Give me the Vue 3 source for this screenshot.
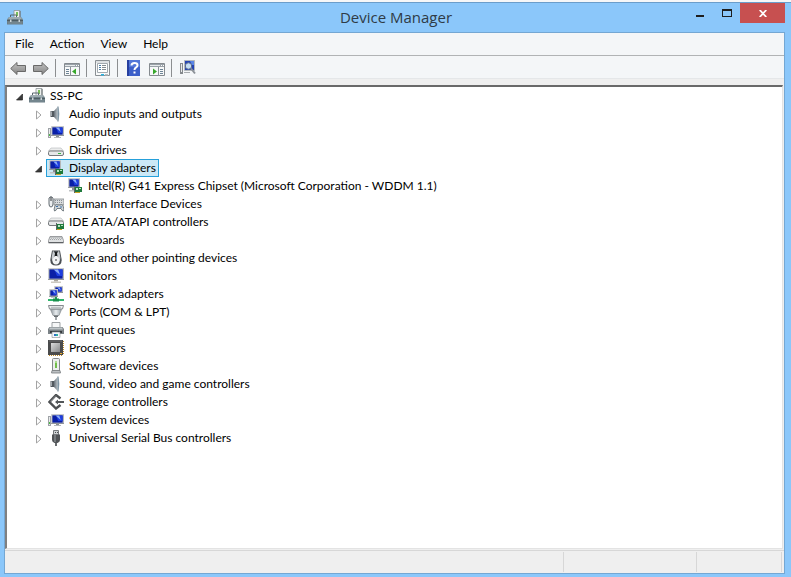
<script setup>
import { ref } from 'vue'

const monitor = (x, y, w, h) =>
  `<rect x="${x}" y="${y}" width="${w}" height="${h}" fill="#b4b7b9"/>` +
  `<path d="M${x} ${y}h${w}v.6h${-w + 0.6}v${h - 0.6}h-.6z" fill="#dcdedf"/>` +
  `<path d="M${x} ${y + h - 0.7}h${w}v.7h${-w}z" fill="#85898d"/>` +
  `<rect x="${x + 1.4}" y="${y + 1.4}" width="${w - 2.8}" height="${h - 2.8}" fill="#0a1fa6"/>` +
  `<path d="M${x + w * 0.4} ${y + 1.4}h${w * 0.6 - 1.4}v${h * 0.55}h${-w * 0.35}z" fill="#1d3ee0"/>` +
  `<path d="M${x + w * 0.35} ${y + 1.4}h${w * 0.28}l${w * 0.12} ${h * 0.45}z" fill="#8fb0f6"/>`

const card = (x, y) =>
  `<rect x="${x}" y="${y}" width="7" height="5" fill="#1f7a3c"/><path d="M${x} ${y + 5}h5v1h-5z" fill="#c9a227"/>` +
  `<path d="M${x + 1} ${y + 1}h2v2h-2zM${x + 4} ${y + 1}h2v1h-2z" fill="#b9e3c2"/><path d="M${x - 1} ${y - 1}h1v7h-1z" fill="#5c6464"/>`

const drive = (y) =>
  `<path d="M3 ${y}h10l2.500 3H.500z" fill="#eceded" stroke="#b4b6b8" stroke-width=".6"/>` +
  `<rect x=".5" y="${y + 3}" width="15" height="4.500" rx="1.500" fill="#e6e8e9" stroke="#75787b"/>`

const speaker =
  '<path d="M2.500 5h3.500v6H2.500z" fill="#53595f"/><path d="M3 5.500h1V10H3z" fill="#a4aab0"/><path d="M6 5l4-4.500v15L6 11z" fill="url(#cone)"/><path d="M10 .5q2 7.500 0 15z" fill="#7d93a2" stroke="#7d93a2" stroke-width=".6"/>'

const computer =
  '<path d="M0 4h3v10H0z" fill="#9fa3a7"/><path d="M1 5h1v8H1z" fill="#e9ebec"/><path d="M1 10h1v2H1z" fill="#4db848"/>' +
  monitor(3, 2, 13, 10) +
  '<path d="M8 12h3v1H8z" fill="#888d92"/><path d="M6 13h7v1H6z" fill="#b5b8bb"/>'

const toolbox =
  '<path d="M7 .5h6V8H7z" fill="#eef1ee" stroke="#8e9698" stroke-width=".8"/><path d="M9 2h2v4H9z" fill="#78bf58"/><path d="M12.500 1h1v6h-1z" fill="#666d70"/>' +
  '<path d="M2 7h12l2 2.500v5H0v-5z" fill="#6d7f87"/><path d="M2.500 7h11l1.500 2H1z" fill="#9eacb1"/><path d="M3.500 7V5h6v2" fill="none" stroke="#59666c"/>' +
  '<path d="M0 10.500h16" stroke="#46545b" stroke-width=".8"/><path d="M3 9.500h1.500v2.500H3zM11.500 9.500H13v2.500h-1.500z" fill="#cdd6d9"/><path d="M1 13h14" stroke="#80929a" stroke-width=".8"/>'

const icons = {
  toolbox,
  speaker,
  computer,
  disk: drive(6) + '<path d="M10 11h3v1h-3z" fill="#38b544"/>',
  display:
    monitor(1, 0, 12, 10) +
    '<path d="M5 10h3v2H5z" fill="#8b9095"/><path d="M2 12h6v1.500H2z" fill="#bfc2c5"/>' + card(8, 9),
  hid:
    '<path d="M1 2q2-3 4 0v6q0 3-2 3t-2-3z" fill="#eceff1" stroke="#626a70"/><path d="M3 1v4" stroke="#303539"/>' +
    '<path d="M6 3h10v6H6z" fill="#d8dbdd" stroke="#777c80" stroke-width=".7"/><path d="M7 4.500h8M7 6.500h8" stroke="#8a9095" stroke-dasharray="1 1"/>' +
    '<path d="M6.500 15q-1-1 .5-5.500 1-1.500 3-.5h2q2-1 3 .5 1.500 4.500.5 5.500-1.500 0-2.500-2.500h-4Q8 15 6.500 15z" fill="#cfd6da" stroke="#5a646b" stroke-width=".8"/><path d="M8 10.500h2M13 10v2" stroke="#3f6fa8"/>',
  ide: drive(4) + card(9, 10),
  keyboard:
    '<path d="M2 4.500h12l1.500 4v2.500h-15V8.500z" fill="#dfe1e2" stroke="#85888b" stroke-width=".8"/>' +
    '<path d="M2.500 5.500h11M2 7.500h12" stroke="#a1a4a7" stroke-dasharray="1 1"/><path d="M3 6.500h11" stroke="#b5b8bb" stroke-dasharray="1 1"/><path d="M1 10.500h14" stroke="#5e6164"/>',
  mouse:
    '<path d="M4 .5h8l1.500 8q1 7-5.500 7t-5.500-7z" fill="#4a4e52"/><path d="M5 .5l2 3-2 8q-2-2-1-6zM11 .5l-2 3 2 8q2-2 1-6z" fill="#c8ccd0"/>' +
    '<path d="M8 5q5 4 3 8-3 3-6 0-2-4 3-8z" fill="#f3f4f5"/><path d="M7 2h2v4H7z" fill="#17191b"/><circle cx="8" cy="10" r="1" fill="#777"/>',
  monitor:
    monitor(0, 0, 16, 12) + '<path d="M6 12h4v1.500H6z" fill="#a9a69d"/><path d="M3 13.500h10V15H3z" fill="#ccc9c0"/>',
  network:
    monitor(6, 0, 9, 7) + monitor(1, 3, 9, 8) +
    '<path d="M3 11h5v1H3z" fill="#c5c8cb"/><path d="M7 11h2v2H7z" fill="#1f9c55"/><path d="M0 13h16v2H0z" fill="#2fb56b"/><path d="M5 12.500h6v3H5z" fill="#1b8f4c"/>',
  port:
    '<path d="M.5 1.500h15L14.500 5H1.500z" fill="#eceeef" stroke="#84898d"/><path d="M3 3.300h10" stroke="#a3a8ab" stroke-width=".8"/>' +
    '<path d="M2.500 5.500h11l-2.500 6H5z" fill="url(#steel)" stroke="#84898d" stroke-width=".7"/><path d="M6 11.500h4V13H6z" fill="#6b7074"/><path d="M7 13h2v3H7z" fill="#a1a5a8"/>',
  printer:
    '<path d="M4 .5h8V6H4z" fill="#f6f7f7" stroke="#888d90" stroke-width=".8"/><path d="M1.500 5h13l1.500 2v5H0V7z" fill="#7b8286"/><path d="M2 5.500h12l1 2H1z" fill="#bfc5c8"/>' +
    '<path d="M2 9h12v2H2z" fill="#34393c"/><path d="M4 10h8v5.500H4z" fill="#f4f6f8" stroke="#888d90" stroke-width=".6"/><path d="M6 12h2v2H6z" fill="#2c6fc4"/><path d="M8 12h2v2H8z" fill="#2faf9b"/>',
  processor:
    '<path d="M0 0h15v15H0z" fill="#4a4b4c"/><path d="M3 3h9v9H3z" fill="url(#chip)"/><path d="M1 1h13" stroke="#6f7173"/>' +
    '<path d="M15.500 1v14M1 15.500h14" stroke="#c08d2b" stroke-dasharray="1 1"/><path d="M12 13h2v1h-2z" fill="#e6a92f"/>',
  software:
    '<path d="M4.500 1.500q0-1 1-1h5q1 0 1 1V13h-7z" fill="#eceeef" stroke="#85898c"/><path d="M7 3h2v7H7z" fill="#72bd4c"/><path d="M7 3h2v2H7z" fill="#a9dc8d"/><path d="M4 12.500h8l.5 2.500h-9z" fill="#bdc1c4" stroke="#777b7e" stroke-width=".8"/>',
  storage:
    '<path d="M12.500 4.500L8 1 1.500 8 8 14.500l4.500-3.500" fill="none" stroke="#4c4f51" stroke-width="2.400"/><path d="M8 1.500L2.500 7.500" stroke="#929699" stroke-width=".8"/>' +
    '<path d="M7 8l3-2.500V7h6v2h-6v1.500z" fill="#54585a"/>',
  usb:
    '<path d="M5.500.500h5V5h-5z" fill="#cfd2d4" stroke="#75797c"/><path d="M7 2h1v1H7zM9 2h1v1H9z" fill="#4b4f52"/><path d="M4 4.500h8V10q0 2-2.500 3h-3Q4 12 4 10z" fill="#505356"/><path d="M6 5h2v7H6z" fill="#777b7e"/><path d="M7 13h2v3H7z" fill="#686c6f"/>',
  back: '<path d="M.7 8.500L7 2.500v3h8.500v6H7v3z" fill="url(#arrow)" stroke="#696969"/>',
  forward: '<path d="M15.300 8.500L9 2.500v3H.500v6H9v3z" fill="url(#arrow)" stroke="#696969"/>',
  consoleTree:
    '<path d="M.5 3.500h15v12H.500z" fill="#f7f8f9" stroke="#858a8f"/><path d="M1 4h14v3H1z" fill="#9aa2a9"/><path d="M1 5.500h10" stroke="#e7eaec"/><path d="M12 5.500h1M14 5.500h1" stroke="#fff"/>' +
    '<path d="M6.500 7v9" stroke="#8b9197"/><path d="M2 9.500h3M2 11.500h3M2 13.500h3" stroke="#6d8496"/><path d="M12 8.500v6l-4-3z" fill="#37a72b"/>',
  properties:
    '<path d="M.5.500h14v15H.500z" fill="#f8f9fa" stroke="#8a8f94"/><path d="M2.500 3.500h10v9h-10z" fill="#fff" stroke="#a1a8ae"/><path d="M1 2h13" stroke="#c5c9cd"/>' +
    '<path d="M4 5.500h2M4 7.500h2M4 9.500h2" stroke="#4d7ea8"/><path d="M7 5.500h4M7 7.500h4M7 9.500h4" stroke="#858b90"/><path d="M6 14h3v1.500H6z" fill="#28b3e2"/><path d="M10 14h3v1.500h-3z" fill="#b9bec2"/>',
  help:
    '<path d="M1 0h13v16H1z" fill="#3c5fc9"/><path d="M1 0h2v16H1z" fill="#263f9f"/><path d="M3 0h11v7H3z" fill="#5377d8"/>' +
    '<path d="M5.500 5.500q0-2.500 3-2.500t3 2.300q0 1.500-1.600 2.400-1.400.8-1.400 2.300" fill="none" stroke="#fff" stroke-width="2"/><path d="M7.500 11.500h2v2h-2z" fill="#fff"/>',
  actionPane:
    '<path d="M.5 3.500h15v12H.500z" fill="#f7f8f9" stroke="#858a8f"/><path d="M1 4h14v3H1z" fill="#9aa2a9"/><path d="M1 5.500h10" stroke="#e7eaec"/><path d="M12 5.500h1M14 5.500h1" stroke="#fff"/>' +
    '<path d="M9.500 7v9" stroke="#8b9197"/><path d="M11 9.500h3M11 11.500h3M11 13.500h3" stroke="#6d8496"/><path d="M4 8.500v6l4-3z" fill="#37a72b"/>',
  scan:
    '<path d="M0 3h3v11H0z" fill="#85898d"/><path d="M1 4h1v8H1z" fill="#e9ebec"/><path d="M4.500.500h10v10h-10z" fill="#2443b4" stroke="#b4b8bc"/><path d="M10 1h4v4h-2z" fill="#5b86e6"/>' +
    '<circle cx="8.500" cy="6" r="3.200" fill="#c4def5" stroke="#5c6c8c"/><path d="M11 8.500l4 5" stroke="#8b9197" stroke-width="2"/><path d="M4 12.500h6" stroke="#a9adb1"/>'
}

const menus = ['File', 'Action', 'View', 'Help']

const toolGroups = [
  [{ icon: 'back', label: 'Back' }, { icon: 'forward', label: 'Forward' }],
  [{ icon: 'consoleTree', label: 'Show or hide console tree' }],
  [{ icon: 'properties', label: 'Properties' }],
  [{ icon: 'help', label: 'Help' }, { icon: 'actionPane', label: 'Show or hide action pane' }],
  [{ icon: 'scan', label: 'Scan for hardware changes' }]
]

const rows = [
  { level: 0, icon: 'toolbox', name: 'SS-PC', open: true },
  { level: 1, icon: 'speaker', name: 'Audio inputs and outputs' },
  { level: 1, icon: 'computer', name: 'Computer' },
  { level: 1, icon: 'disk', name: 'Disk drives' },
  { level: 1, icon: 'display', name: 'Display adapters', open: true },
  { level: 2, icon: 'display', name: 'Intel(R) G41 Express Chipset (Microsoft Corporation - WDDM 1.1)', leaf: true },
  { level: 1, icon: 'hid', name: 'Human Interface Devices' },
  { level: 1, icon: 'ide', name: 'IDE ATA/ATAPI controllers' },
  { level: 1, icon: 'keyboard', name: 'Keyboards' },
  { level: 1, icon: 'mouse', name: 'Mice and other pointing devices' },
  { level: 1, icon: 'monitor', name: 'Monitors' },
  { level: 1, icon: 'network', name: 'Network adapters' },
  { level: 1, icon: 'port', name: 'Ports (COM & LPT)' },
  { level: 1, icon: 'printer', name: 'Print queues' },
  { level: 1, icon: 'processor', name: 'Processors' },
  { level: 1, icon: 'software', name: 'Software devices' },
  { level: 1, icon: 'speaker', name: 'Sound, video and game controllers' },
  { level: 1, icon: 'storage', name: 'Storage controllers' },
  { level: 1, icon: 'computer', name: 'System devices' },
  { level: 1, icon: 'usb', name: 'Universal Serial Bus controllers' }
]

const selected = ref('Display adapters')
</script>

<template>
  <div class="window">
    <svg class="defs" aria-hidden="true">
      <defs>
        <linearGradient id="steel"><stop offset="0" stop-color="#8b949b" /><stop offset=".5" stop-color="#e9edef" /><stop offset="1" stop-color="#98a3ab" /></linearGradient>
        <linearGradient id="cone"><stop offset="0" stop-color="#666f77" /><stop offset="1" stop-color="#c3cbd1" /></linearGradient>
        <linearGradient id="arrow" x2="0" y2="1"><stop offset="0" stop-color="#c2c2c2" /><stop offset="1" stop-color="#848484" /></linearGradient>
        <linearGradient id="chip" x2="1" y2="1"><stop offset="0" stop-color="#dcdddd" /><stop offset="1" stop-color="#858789" /></linearGradient>
      </defs>
    </svg>
    <header class="titlebar">
      <div class="side"><svg class="icon" viewBox="0 0 16 16" aria-hidden="true" v-html="icons.toolbox"></svg></div>
      <h1>Device Manager</h1>
      <div class="side controls">
        <button class="ctl" aria-label="Minimize"><svg width="8" height="8"><path d="M0 6h8v2H0z" fill="#1e1e1e" /></svg></button>
        <button class="ctl" aria-label="Maximize"><svg width="10" height="8"><path d="M0 0h10v8H0zM1 2v5h8V2z" fill="#1e1e1e" fill-rule="evenodd" /></svg></button>
        <button class="ctl close" aria-label="Close"><svg width="8" height="7"><path d="M.7 0l6.600 7M7.300 0L.7 7" stroke="#fff" stroke-width="1.800" /></svg></button>
      </div>
    </header>

    <main class="client">
      <nav class="menubar">
        <button v-for="m in menus" :key="m">{{ m }}</button>
      </nav>
      <div class="toolbar">
        <div v-for="(group, i) in toolGroups" :key="i" class="group">
          <button v-for="t in group" :key="t.icon" :aria-label="t.label">
            <svg class="icon" viewBox="0 0 16 16" aria-hidden="true" v-html="icons[t.icon]"></svg>
          </button>
        </div>
      </div>

      <ul class="tree">
        <li v-for="row in rows" :key="row.name" :class="'level' + row.level">
          <button v-if="!row.leaf" class="twisty" :aria-label="(row.open ? 'Collapse ' : 'Expand ') + row.name">
            <svg width="8" height="10" viewBox="0 0 8 10">
              <path v-if="row.open" d="M6.500 2v6H.500z" fill="#3a3a3a" stroke="#262626" stroke-width=".7" />
              <path v-else d="M1.500 1v8L6 5z" fill="#fff" stroke="#a3a3a3" />
            </svg>
          </button>
          <span v-else class="twisty"></span>
          <button class="node" :class="{ selected: selected === row.name }" @click="selected = row.name">
            <svg class="icon" viewBox="0 0 16 16" aria-hidden="true" v-html="icons[row.icon]"></svg>
            <span>{{ row.name }}</span>
          </button>
        </li>
      </ul>

      <footer class="status"><span class="message"></span><span class="wide"></span><span class="narrow"></span></footer>
    </main>
  </div>
</template>

<style>
body {
  margin: 0;
  background: #8bc7fa;
}
</style>

<style scoped>
.window {
  box-sizing: border-box;
  display: flex;
  flex-direction: column;
  min-height: 100vh;
  padding: 0 6px 3px 4px;
  border-top: 2px solid #f6f7f8;
  background: #8bc7fa;
  font-family: Lato, "Open Sans", sans-serif;
  font-size: 12px;
  color: #000;
}
.defs {
  position: absolute;
  width: 0;
  height: 0;
}
button {
  padding: 0;
  border: 0;
  background: none;
  font: inherit;
  color: inherit;
}
.icon {
  flex: none;
  display: block;
  width: 16px;
  height: 16px;
}
.titlebar {
  display: flex;
  height: 29px;
  margin: 0 -6px 0 -4px;
  padding: 0 6px 0 7px;
  border-top: 1px solid #6b9dca;
}
.side {
  flex: 1;
  padding-top: 7px;
}
.titlebar h1 {
  margin: 0;
  font-family: "Open Sans", sans-serif;
  font-size: 15px;
  font-weight: 400;
  line-height: 28px;
  color: #2f3b46;
}
.controls {
  display: flex;
  justify-content: flex-end;
  align-items: flex-start;
  padding-top: 0;
}
.ctl {
  display: flex;
  justify-content: center;
  width: 27px;
  height: 20px;
  padding-top: 6px;
}
.close {
  width: 45px;
  padding-top: 7px;
  background: #c75050;
}
.client {
  flex: 1;
  display: flex;
  flex-direction: column;
  border: 1px solid #74a7d3;
  background: #efefef;
}
.menubar {
  display: flex;
  height: 22px;
  padding-left: 2px;
  background: #f4f6f8;
  border-bottom: 1px solid #b1b3b5;
}
.menubar button {
  padding: 0 8px;
  line-height: 22px;
}
.toolbar {
  display: flex;
  height: 20px;
  padding: 2px 0 0 1px;
  margin-bottom: 6px;
  background: #f4f6f8;
  border-bottom: 1px solid #e5e7e9;
}
.group {
  display: flex;
}
.group + .group::before {
  content: "";
  width: 1px;
  height: 18px;
  margin: 1px 4px 0 3px;
  background: #8c8e90;
}
.group button {
  width: 23px;
  height: 20px;
  padding: 0 3px 0 4px;
}
.tree {
  flex: 1;
  margin: 0;
  padding: 0 0 0 3px;
  list-style: none;
  background: #fff;
  border: 1px solid #e3e3e3;
  border-top: 2px solid #696969;
  border-left: 2px solid #808080;
  margin-right: 1px;
}
.tree li {
  display: flex;
  height: 18px;
}
.level1 {
  padding-left: 19px;
}
.level2 {
  padding-left: 38px;
}
.twisty {
  display: flex;
  justify-content: center;
  align-items: center;
  box-sizing: border-box;
  width: 17px;
  height: 20px;
  padding-left: 2px;
}
.node {
  display: flex;
  align-items: center;
  gap: 5px;
  padding: 0 2px 0 1px;
  border: 1px solid transparent;
  line-height: 16px;
  white-space: nowrap;
}
.node.selected {
  background: #cbe8f6;
  border-color: #26a0da;
}
.status {
  display: flex;
  height: 22px;
  margin-top: 1px;
  padding-right: 2px;
  border-top: 1px solid #d7d7d7;
}
.status span {
  margin: 1px 0;
  border-right: 1px solid #d7d7d7;
}
.message {
  flex: 1;
}
.wide {
  width: 132px;
}
.narrow {
  width: 84px;
}
</style>
